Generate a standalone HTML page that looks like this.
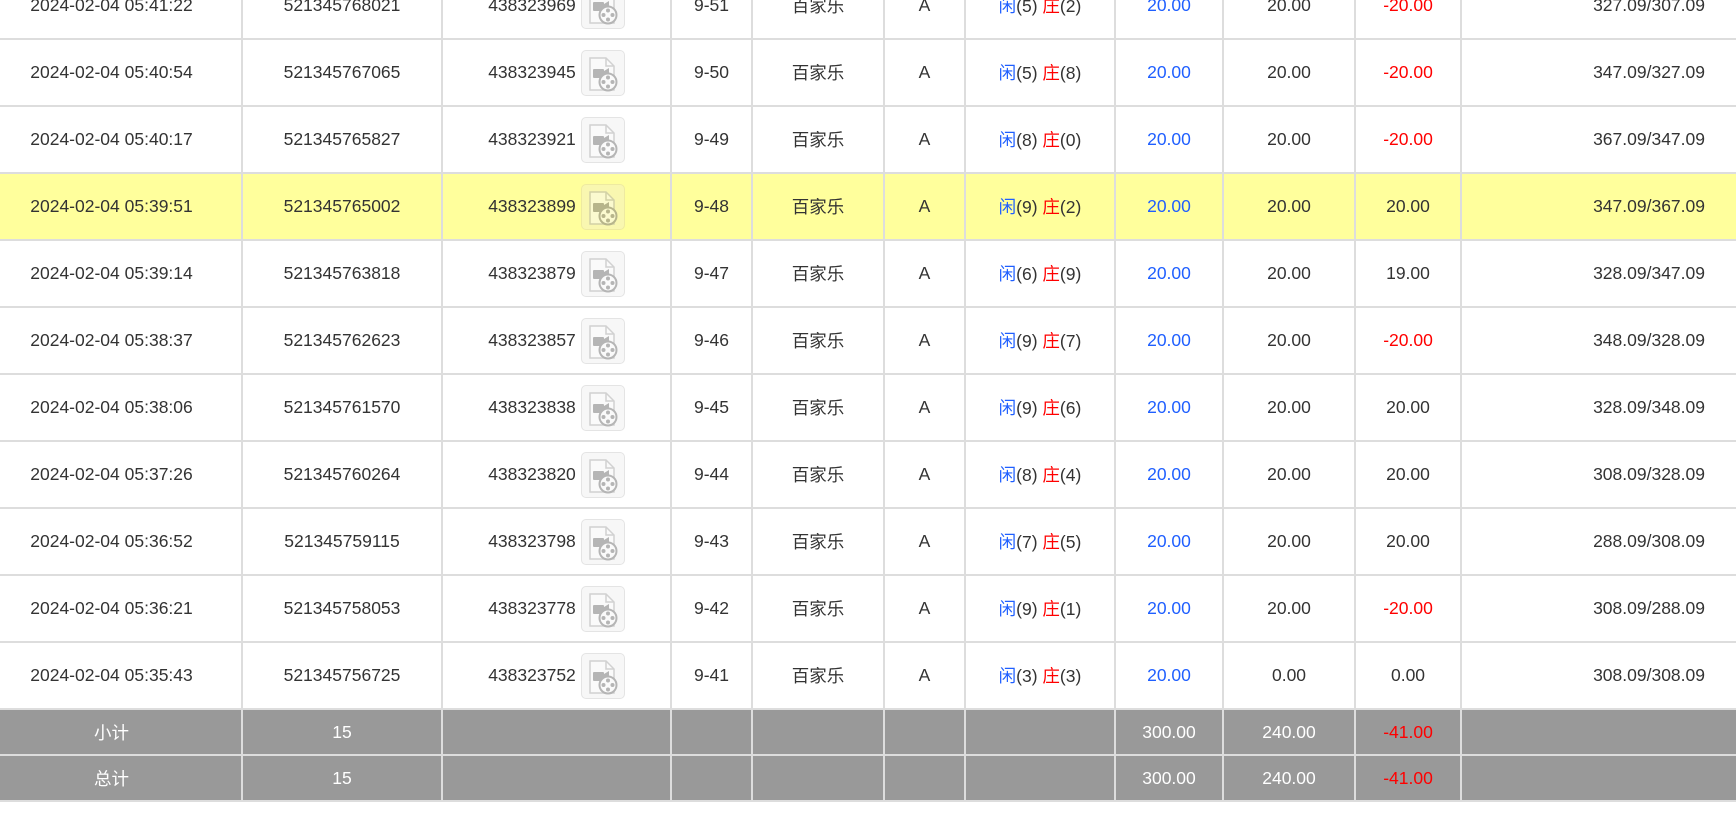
<!DOCTYPE html>
<html><head><meta charset="utf-8"><style>
html,body{margin:0;padding:0;background:#fff;width:1736px;height:818px;overflow:hidden}
table{position:absolute;top:-27px;left:0;border-collapse:separate;border-spacing:0;table-layout:fixed;width:1736px;font-family:"Liberation Sans","Noto Sans CJK SC",sans-serif;font-size:17.5px;color:#333}
td{box-sizing:border-box;height:67px;padding:0;text-align:center;vertical-align:middle;border-right:2px solid #ddd;border-bottom:2px solid #ddd;white-space:nowrap}
td:first-child{padding-right:18px}
td:last-child{border-right:none;text-align:right;padding-right:31px}
tr.hl td{background:#ffff9c}
tr.g td{background:#999;color:#fff;height:46px}
.b{color:#1f5fff}.r{color:#f00}
.w{display:inline-flex;align-items:center}
.ic{display:inline-block;width:44px;height:46px;margin-left:5px;border:1px solid #e4e4e4;border-radius:5px;box-sizing:border-box;background:#f7f7f7}
tr.hl .ic{background:#f9f7b0;border-color:#eeeaa0}
.ic svg{display:block;margin:5px auto 0}
</style></head><body>
<svg width="0" height="0" style="position:absolute"><defs><symbol id="v" viewBox="0 0 30 36"><g opacity="0.4"><path d="M2 2h16l8 8v24H2z" fill="#fff" stroke="#999" stroke-width="1.5"/><path d="M18 2v8h8" fill="none" stroke="#999" stroke-width="1.5"/><rect x="5" y="13" width="11" height="9" rx="1" fill="#555"/><path d="M16 15l5-3v11l-5-3z" fill="#555"/><circle cx="20" cy="26" r="8.5" fill="#fff" stroke="#555" stroke-width="2"/><circle cx="20" cy="21.5" r="2" fill="#555"/><circle cx="20" cy="30.5" r="2" fill="#555"/><circle cx="15.5" cy="26" r="2" fill="#555"/><circle cx="24.5" cy="26" r="2" fill="#555"/></g></symbol></defs></svg>
<table>
<colgroup><col style="width:243px"><col style="width:200px"><col style="width:229px"><col style="width:81px"><col style="width:132px"><col style="width:81px"><col style="width:150px"><col style="width:108px"><col style="width:132px"><col style="width:106px"><col style="width:274px"></colgroup>
<tr><td>2024-02-04 05:41:22</td><td>521345768021</td><td><span class="w">438323969<span class="ic"><svg width="30" height="36"><use href="#v"/></svg></span></span></td><td>9-51</td><td>百家乐</td><td>A</td><td><span class="b">闲</span>(5) <span class="r">庄</span>(2)</td><td class="b">20.00</td><td>20.00</td><td class="r">-20.00</td><td>327.09/307.09</td></tr>
<tr><td>2024-02-04 05:40:54</td><td>521345767065</td><td><span class="w">438323945<span class="ic"><svg width="30" height="36"><use href="#v"/></svg></span></span></td><td>9-50</td><td>百家乐</td><td>A</td><td><span class="b">闲</span>(5) <span class="r">庄</span>(8)</td><td class="b">20.00</td><td>20.00</td><td class="r">-20.00</td><td>347.09/327.09</td></tr>
<tr><td>2024-02-04 05:40:17</td><td>521345765827</td><td><span class="w">438323921<span class="ic"><svg width="30" height="36"><use href="#v"/></svg></span></span></td><td>9-49</td><td>百家乐</td><td>A</td><td><span class="b">闲</span>(8) <span class="r">庄</span>(0)</td><td class="b">20.00</td><td>20.00</td><td class="r">-20.00</td><td>367.09/347.09</td></tr>
<tr class="hl"><td>2024-02-04 05:39:51</td><td>521345765002</td><td><span class="w">438323899<span class="ic"><svg width="30" height="36"><use href="#v"/></svg></span></span></td><td>9-48</td><td>百家乐</td><td>A</td><td><span class="b">闲</span>(9) <span class="r">庄</span>(2)</td><td class="b">20.00</td><td>20.00</td><td>20.00</td><td>347.09/367.09</td></tr>
<tr><td>2024-02-04 05:39:14</td><td>521345763818</td><td><span class="w">438323879<span class="ic"><svg width="30" height="36"><use href="#v"/></svg></span></span></td><td>9-47</td><td>百家乐</td><td>A</td><td><span class="b">闲</span>(6) <span class="r">庄</span>(9)</td><td class="b">20.00</td><td>20.00</td><td>19.00</td><td>328.09/347.09</td></tr>
<tr><td>2024-02-04 05:38:37</td><td>521345762623</td><td><span class="w">438323857<span class="ic"><svg width="30" height="36"><use href="#v"/></svg></span></span></td><td>9-46</td><td>百家乐</td><td>A</td><td><span class="b">闲</span>(9) <span class="r">庄</span>(7)</td><td class="b">20.00</td><td>20.00</td><td class="r">-20.00</td><td>348.09/328.09</td></tr>
<tr><td>2024-02-04 05:38:06</td><td>521345761570</td><td><span class="w">438323838<span class="ic"><svg width="30" height="36"><use href="#v"/></svg></span></span></td><td>9-45</td><td>百家乐</td><td>A</td><td><span class="b">闲</span>(9) <span class="r">庄</span>(6)</td><td class="b">20.00</td><td>20.00</td><td>20.00</td><td>328.09/348.09</td></tr>
<tr><td>2024-02-04 05:37:26</td><td>521345760264</td><td><span class="w">438323820<span class="ic"><svg width="30" height="36"><use href="#v"/></svg></span></span></td><td>9-44</td><td>百家乐</td><td>A</td><td><span class="b">闲</span>(8) <span class="r">庄</span>(4)</td><td class="b">20.00</td><td>20.00</td><td>20.00</td><td>308.09/328.09</td></tr>
<tr><td>2024-02-04 05:36:52</td><td>521345759115</td><td><span class="w">438323798<span class="ic"><svg width="30" height="36"><use href="#v"/></svg></span></span></td><td>9-43</td><td>百家乐</td><td>A</td><td><span class="b">闲</span>(7) <span class="r">庄</span>(5)</td><td class="b">20.00</td><td>20.00</td><td>20.00</td><td>288.09/308.09</td></tr>
<tr><td>2024-02-04 05:36:21</td><td>521345758053</td><td><span class="w">438323778<span class="ic"><svg width="30" height="36"><use href="#v"/></svg></span></span></td><td>9-42</td><td>百家乐</td><td>A</td><td><span class="b">闲</span>(9) <span class="r">庄</span>(1)</td><td class="b">20.00</td><td>20.00</td><td class="r">-20.00</td><td>308.09/288.09</td></tr>
<tr><td>2024-02-04 05:35:43</td><td>521345756725</td><td><span class="w">438323752<span class="ic"><svg width="30" height="36"><use href="#v"/></svg></span></span></td><td>9-41</td><td>百家乐</td><td>A</td><td><span class="b">闲</span>(3) <span class="r">庄</span>(3)</td><td class="b">20.00</td><td>0.00</td><td>0.00</td><td>308.09/308.09</td></tr>
<tr class="g"><td>小计</td><td>15</td><td></td><td></td><td></td><td></td><td></td><td>300.00</td><td>240.00</td><td style="color:#f00">-41.00</td><td></td></tr>
<tr class="g"><td>总计</td><td>15</td><td></td><td></td><td></td><td></td><td></td><td>300.00</td><td>240.00</td><td style="color:#f00">-41.00</td><td></td></tr>
</table>
</body></html>
